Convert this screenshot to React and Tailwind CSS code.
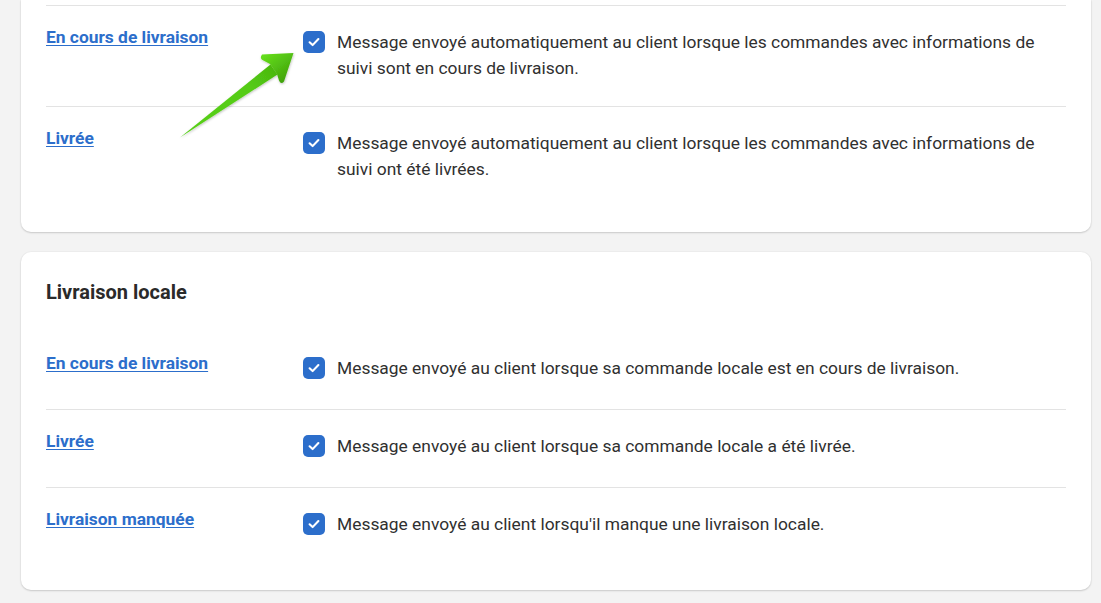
import React from "react";

function Checkbox() {
  return (
    <div className="mt-[2px] flex h-[22px] w-[22px] shrink-0 items-center justify-center rounded-[5px] bg-[#2c6ecb]">
      <svg width="14" height="14" viewBox="0 0 14 14" fill="none">
        <path d="M2.6 7.3 L5.6 10.1 L11.4 4" stroke="white" strokeWidth="2.1" strokeLinecap="round" strokeLinejoin="round" />
      </svg>
    </div>
  );
}

function Row({ label, children, first }) {
  return (
    <div className={`flex items-start pt-[23px] pb-[25px] ${first ? "" : "border-t border-[#e3e3e3]"}`}>
      <div className="-mt-[4px] w-[257px] shrink-0">
        <a href="#" className="text-[17.4px] font-bold leading-[24px] text-[#2c6ecb] underline underline-offset-[2px]">
          {label}
        </a>
      </div>
      <div className="flex min-h-[29px] flex-1 items-start gap-3">
        <Checkbox />
        <p className="text-[17.4px] leading-[26px] text-[#303030]">{children}</p>
      </div>
    </div>
  );
}

export default function App() {
  return (
    <div className="relative min-h-[603px] w-full overflow-hidden bg-[#f3f3f3] pl-[21px] pr-[10px] font-['Roboto',sans-serif]">
      <div className="rounded-b-[10px] bg-white px-[25px] pb-[25px] pt-[5px] shadow-[0_1px_2px_rgba(0,0,0,0.16),0_0_0_1px_rgba(0,0,0,0.02)]">
        <Row label="En cours de livraison">
          Message envoyé automatiquement au client lorsque les commandes avec informations de suivi sont en cours de livraison.
        </Row>
        <Row label="Livrée">
          Message envoyé automatiquement au client lorsque les commandes avec informations de suivi ont été livrées.
        </Row>
      </div>

      <div className="mt-[20px] rounded-[10px] bg-white px-[25px] pb-[25px] pt-[26px] shadow-[0_1px_2px_rgba(0,0,0,0.16),0_0_0_1px_rgba(0,0,0,0.02)]">
        <h2 className="mb-[26px] text-[20px] font-bold leading-[28px] text-[#2a2a2a]">Livraison locale</h2>
        <Row label="En cours de livraison" first>
          Message envoyé au client lorsque sa commande locale est en cours de livraison.
        </Row>
        <Row label="Livrée">Message envoyé au client lorsque sa commande locale a été livrée.</Row>
        <Row label="Livraison manquée">Message envoyé au client lorsqu'il manque une livraison locale.</Row>
      </div>

      <svg className="pointer-events-none absolute left-0 top-0" width="1101" height="603" viewBox="0 0 1101 603">
        <defs>
          <linearGradient id="arrowGrad" x1="180" y1="137" x2="293" y2="53" gradientUnits="userSpaceOnUse">
            <stop offset="0" stopColor="#58cf1a" />
            <stop offset="0.6" stopColor="#55cc14" />
            <stop offset="1" stopColor="#43a90c" />
          </linearGradient>
          <linearGradient id="headGrad" x1="262" y1="55" x2="284" y2="84" gradientUnits="userSpaceOnUse">
            <stop offset="0" stopColor="#66e01c" />
            <stop offset="1" stopColor="#3f9f0a" />
          </linearGradient>
          <filter id="arrowShadow" x="-20%" y="-20%" width="140%" height="140%">
            <feDropShadow dx="0.5" dy="1" stdDeviation="0.8" floodColor="#000" floodOpacity="0.25" />
          </filter>
        </defs>
        <g filter="url(#arrowShadow)">
          <path d="M180 137.5 L270.5 64.5 L277.5 74.5 Z" fill="url(#arrowGrad)" />
          <path
            d="M262 54.5 Q259 58.5 263.5 60.5 L270 64 L277 74 L279 80.5 Q281 85 284 81.5 L293.5 53 Z"
            fill="url(#headGrad)"
            strokeLinejoin="round"
          />
        </g>
      </svg>
    </div>
  );
}
